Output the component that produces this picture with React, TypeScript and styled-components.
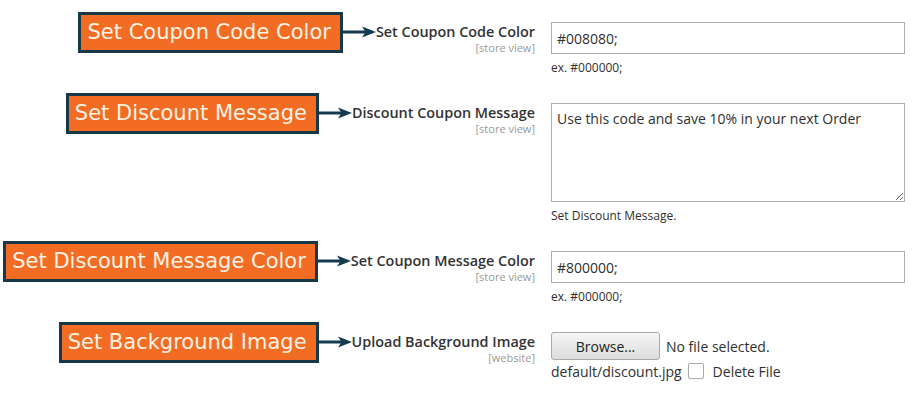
import React from 'react'
import styled, { createGlobalStyle } from 'styled-components'

const GlobalStyle = createGlobalStyle`
  body {
    margin: 0;
    background: #fff;
    font-family: "Open Sans", "Liberation Sans", sans-serif;
    color: #303030;
  }
`

const Form = styled.div`
  width: 916px;
  padding-top: 22px;
  display: flex;
  flex-direction: column;
  gap: 26px;
`

const Row = styled.div`
  display: flex;
  align-items: flex-start;
  gap: 16px;
`

const LabelCol = styled.div`
  width: 535px;
  padding-top: 1px;
  display: flex;
  flex-direction: column;
  align-items: flex-end;
`

const Head = styled.div`
  display: flex;
  align-items: center;
`

const Callout = styled.div`
  margin: -12px 0;
  height: 35px;
  padding: 0 9px 0 6px;
  display: flex;
  align-items: center;
  background: #f26d23;
  border: 3px solid #163849;
  color: #fdf2e4;
  font-family: "DejaVu Sans", sans-serif;
  font-size: 21px;
  white-space: nowrap;
`

const Title = styled.span`
  font-size: 14.4px;
  font-weight: 600;
  line-height: 18px;
  color: #333;
  white-space: nowrap;
`

const Scope = styled.span`
  font-size: 11px;
  line-height: 13px;
  color: #999;
`

const Control = styled.div`
  width: 354px;
  display: flex;
  flex-direction: column;
`

const TextInput = styled.input`
  box-sizing: border-box;
  width: 100%;
  height: 32px;
  margin: 0;
  padding: 0 5px;
  border: 1px solid #adadad;
  border-radius: 0;
  font-family: "Open Sans", sans-serif;
  font-size: 14px;
  color: #303030;
  outline: none;
`

const TextArea = styled.textarea`
  box-sizing: border-box;
  width: 100%;
  height: 99px;
  margin: 0;
  padding: 5px;
  border: 1px solid #adadad;
  border-radius: 0;
  font-family: "Open Sans", sans-serif;
  font-size: 14px;
  line-height: 20px;
  color: #303030;
  outline: none;
  resize: vertical;
`

const Note = styled.div`
  margin-top: 5px;
  font-size: 12px;
  line-height: 18px;
  color: #303030;
`

const FileLine = styled.div`
  display: flex;
  align-items: center;
  gap: 6px;
  font-size: 14px;
  color: #303030;
`

const BrowseButton = styled.button`
  box-sizing: border-box;
  width: 109px;
  height: 28px;
  margin: 0;
  padding: 0;
  border: 1px solid #a9a9a9;
  border-radius: 3px;
  background: linear-gradient(#f6f6f6, #dcdcdc);
  font-family: "Open Sans", sans-serif;
  font-size: 14px;
  color: #222;
`

const CheckBox = styled.span`
  box-sizing: border-box;
  width: 16px;
  height: 16px;
  margin: 0 9px 0 6px;
  border: 1px solid #a9a9a9;
  border-radius: 2px;
  background: #fff;
`

const CurrentFile = styled(FileLine)`
  height: 20px;
  gap: 0;
  margin-top: 1px;
`

const Arrow = () => (
  <svg width="33" height="12" viewBox="0 0 33 12">
    <line x1="0" y1="6" x2="24" y2="6" stroke="#133a4e" strokeWidth="3" />
    <polygon points="19,0.5 33,6 19,11.5 22.5,6" fill="#133a4e" />
  </svg>
)

type LabelProps = {
  callout: string
  title: string
  scope: string
}

const FieldLabel: React.FC<LabelProps> = ({ callout, title, scope }) => (
  <LabelCol>
    <Head>
      <Callout>{callout}</Callout>
      <Arrow />
      <Title>{title}</Title>
    </Head>
    <Scope>{scope}</Scope>
  </LabelCol>
)

export default function App() {
  return (
    <>
      <GlobalStyle />
      <Form>
        <Row>
          <FieldLabel callout="Set Coupon Code Color" title="Set Coupon Code Color" scope="[store view]" />
          <Control>
            <TextInput defaultValue="#008080;" />
            <Note>ex. #000000;</Note>
          </Control>
        </Row>
        <Row>
          <FieldLabel callout="Set Discount Message" title="Discount Coupon Message" scope="[store view]" />
          <Control>
            <TextArea defaultValue="Use this code and save 10% in your next Order" />
            <Note>Set Discount Message.</Note>
          </Control>
        </Row>
        <Row>
          <FieldLabel callout="Set Discount Message Color" title="Set Coupon Message Color" scope="[store view]" />
          <Control>
            <TextInput defaultValue="#800000;" />
            <Note>ex. #000000;</Note>
          </Control>
        </Row>
        <Row>
          <FieldLabel callout="Set Background Image" title="Upload Background Image" scope="[website]" />
          <Control>
            <FileLine>
              <BrowseButton>Browse...</BrowseButton>
              No file selected.
            </FileLine>
            <CurrentFile>
              default/discount.jpg
              <CheckBox />
              Delete File
            </CurrentFile>
          </Control>
        </Row>
      </Form>
    </>
  )
}
